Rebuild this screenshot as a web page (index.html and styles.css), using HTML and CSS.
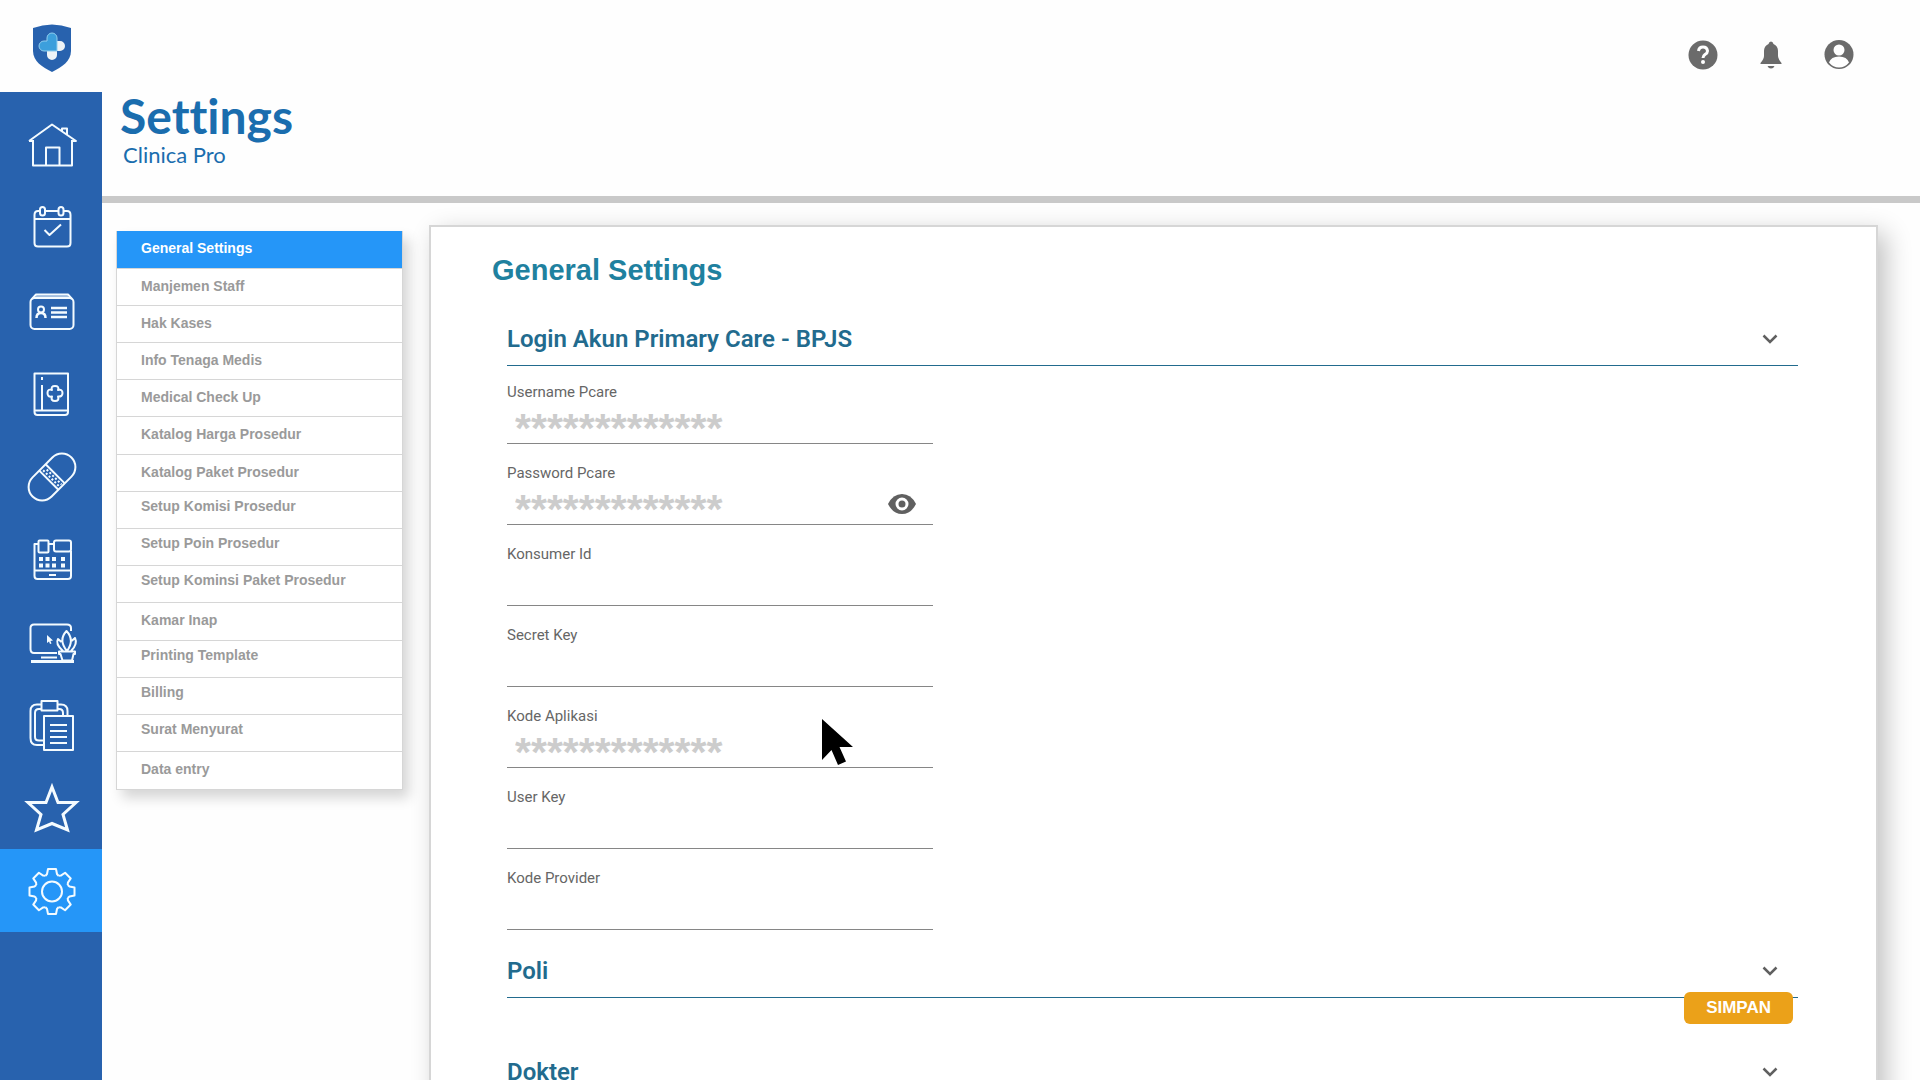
FILE: index.html
```html
<!DOCTYPE html>
<html lang="id">
<head>
  <meta charset="UTF-8" />
  <meta name="viewport" content="width=device-width, initial-scale=1.0"/>
  <title>Settings - Clinica Pro</title>
  <link rel="stylesheet" href="styles.css">
</head>
<body>
  <div class="app">
    <aside class="sidebar">
      <a class="logo" href="#" aria-label="Clinica Pro">
        <svg width="38" height="48" viewBox="0 0 38 48">
          <path d="M0 4Q19-3 38 4V27C38 37 29 43 19 48C9 43 0 37 0 27Z" fill="#2862ae"/>
          <path d="M19 17H27A5 5 0 0 1 27 27H24V31A5 5 0 0 1 14 31V22Z" fill="#eef3f6"/>
          <path d="M14 17V14A5 5 0 0 1 24 14V27H11A5 5 0 0 1 11 17Z" fill="#3c9fdc" stroke="#8fcdee" stroke-width="1"/>
        </svg>
      </a>
      <nav class="side-nav">
        <a href="#" aria-label="Home">
          <svg viewBox="0 0 60 60"><path d="M12 26V51.500H51V26M8 27L31 10.500L55 27H51M8 27H12M25 51V33.500H38.500V51M41 17V14.500H46V21"/></svg>
        </a>
        <a href="#" aria-label="Jadwal">
          <svg viewBox="0 0 60 60"><path d="M19 14H17Q13.500 14 13.500 18V46Q13.500 49.500 17 49.500H46Q49.500 49.500 49.500 46V18Q49.500 14 46 14H43M24 14H37M13.500 22H49.500M23.500 33L28.500 38L40 27.500"/><rect x="19" y="10" width="5" height="8.500" rx="2.500"/><rect x="37.500" y="10" width="5" height="8.500" rx="2.500"/></svg>
        </a>
        <a href="#" aria-label="Pasien">
          <svg viewBox="0 0 60 60"><rect x="9.500" y="18" width="43" height="31" rx="4"/><path d="M11 19L15 14.500H47L51 19"/><path d="M15 16.500H47" opacity=".6"/><circle cx="20" cy="29.500" r="3"/><path d="M15.500 38Q15.500 33 20 33T24.500 38M30 28H46M30 32.500H46M30 37H46" stroke-width="2.500"/></svg>
        </a>
        <a href="#" aria-label="Rekam Medis">
          <svg viewBox="0 0 60 60"><path d="M13.500 10.500H47V49Q47 52 44 52H16.500Q13.500 52 13.500 49ZM13.500 47.500H47M21 14V17M21 22V47M31 27Q29.500 23 34 23T37 27Q41.500 26 41.500 30T37 33.500Q38.500 38 34 38T31 33.500Q26.500 34.500 26.500 30T31 27Z"/></svg>
        </a>
        <a href="#" aria-label="Obat">
          <svg viewBox="0 0 60 60"><g transform="translate(31 31) rotate(-45)"><rect x="-27.500" y="-13.500" width="55" height="27" rx="13.500"/><path d="M-4.500-13.500V13.500M4.500-13.500V13.500"/><path class="dots" d="M-1.500-11V12M1.500-9V12"/></g></svg>
        </a>
        <a href="#" aria-label="Kasir">
          <svg viewBox="0 0 60 60"><path d="M17 15H13.500V47Q13.500 50 16.500 50H47Q50 50 50 47V22M27 15H33M13.500 41.500H50M28 46H35"/><rect x="17.500" y="11.500" width="10" height="12" rx="1"/><rect x="33" y="11.500" width="17" height="11" rx="2"/><path class="solid" d="M18 28h4v4h-4zM24.500 28h4v4h-4zM31 28h4v4h-4zM40 28h4v4h-4zM18 34.500h4v4h-4zM24.500 34.500h4v4h-4zM31 34.500h4v4h-4zM40 34.500h4v4h-4z"/></svg>
        </a>
        <a href="#" aria-label="Komputer">
          <svg viewBox="0 0 60 60"><path d="M36 41H13Q9.500 41 9.500 37V16Q9.500 12.500 13 12.500H46Q50 12.500 50 16V19M20 45.500H36"/><path d="M10 49.500H53" stroke-width="3"/><path class="solid" d="M26 23L32 28.500L29.500 29L30.500 31.500L29 32L28 29.500L26 31Z"/><path d="M38 39.500H54V42H52.500L51 48.500H41.500L39.500 42H38ZM46 39Q37 28 45.500 19Q54 28 46 39ZM42 39Q34 32 37 27L40.500 30M50 39Q57 32 54 26L50.500 29"/></svg>
        </a>
        <a href="#" aria-label="Laporan">
          <svg viewBox="0 0 60 60"><path d="M20 9.500H16Q9.500 9.500 9.500 16V43Q9.500 50 16 50H23M36 9.500H40Q46.500 9.500 46.500 16V21M20 14H18Q14 14 14 18V42Q14 45.500 18 45.500H23M36 14H38Q42 14 42 18V21M20.500 6H36.500V15.500H20.500ZM23 21H52V55H23ZM29 30H46M29 36H46M29 42H46M29 48H46"/></svg>
        </a>
        <a href="#" aria-label="Favorit">
          <svg viewBox="0 0 60 60"><path class="star" d="M31 9L37 24.500H55L42 36.500L46.500 52L31 45.500L15.500 52L20 36.500L7 24.500H25Z"/></svg>
        </a>
        <a class="active" href="#" aria-label="Settings" aria-current="page">
          <svg viewBox="0 0 60 60">
            <defs><path id="tooth" d="M-6.500-15.700L-5-17.500L-4-22.500H4L5-17.500L6.500-15.700"/></defs>
            <g transform="translate(31 30.500)">
              <circle r="10"/>
              <use href="#tooth"/>
              <use href="#tooth" transform="rotate(45)"/>
              <use href="#tooth" transform="rotate(90)"/>
              <use href="#tooth" transform="rotate(135)"/>
              <use href="#tooth" transform="rotate(180)"/>
              <use href="#tooth" transform="rotate(225)"/>
              <use href="#tooth" transform="rotate(270)"/>
              <use href="#tooth" transform="rotate(315)"/>
            </g>
          </svg>
        </a>
      </nav>
    </aside>

    <div class="main">
      <header class="header">
        <div class="title">
          <h1>Settings</h1>
          <p>Clinica Pro</p>
        </div>
        <div class="header-actions">
          <button type="button" aria-label="Bantuan">
            <svg width="30" height="30" viewBox="0 0 30 30"><circle cx="15" cy="15" r="14.500" fill="#6b6b6b"/><path d="M10.500 11Q11 7 15 7T19.500 11Q19.500 13 17 14.500Q15 16 15 18" fill="none" stroke="#fff" stroke-width="3"/><circle cx="15" cy="22" r="2" fill="#fff"/></svg>
          </button>
          <button type="button" aria-label="Notifikasi">
            <svg width="30" height="30" viewBox="0 0 30 30"><path d="M15 1.500Q17 1.500 17.500 4Q22 6 22 11V16Q22 19 25.500 23V24H4.500V23Q8 19 8 16V11Q8 6 12.500 4Q13 1.500 15 1.500ZM11.500 26H18.500Q17.500 28.500 15 28.500T11.500 26Z" fill="#6b6b6b"/></svg>
          </button>
          <button type="button" aria-label="Akun">
            <svg width="30" height="30" viewBox="0 0 30 30"><circle cx="15" cy="14.500" r="14.500" fill="#6b6b6b"/><circle cx="15" cy="10" r="5.500" fill="#fff"/><path d="M5 22.500Q7 16.500 15 16.500T25 22.500Q21 27.500 15 27.500T5 22.500Z" fill="#fff"/></svg>
          </button>
        </div>
      </header>

      <div class="content">
        <nav class="menu">
          <a class="active" href="#">General Settings</a>
          <a href="#">Manjemen Staff</a>
          <a href="#">Hak Kases</a>
          <a href="#">Info Tenaga Medis</a>
          <a href="#">Medical Check Up</a>
          <a href="#">Katalog Harga Prosedur</a>
          <a href="#">Katalog Paket Prosedur</a>
          <a class="high" href="#">Setup Komisi Prosedur</a>
          <a class="high" href="#">Setup Poin Prosedur</a>
          <a class="high" href="#">Setup Kominsi Paket Prosedur</a>
          <a href="#">Kamar Inap</a>
          <a class="high" href="#">Printing Template</a>
          <a class="high" href="#">Billing</a>
          <a class="high" href="#">Surat Menyurat</a>
          <a href="#">Data entry</a>
        </nav>

        <main class="panel">
          <h2>General Settings</h2>

          <section class="section open">
            <div class="section-head">
              <h3>Login Akun Primary Care - BPJS</h3>
              <button type="button" aria-label="Tutup Login Akun"><svg width="16" height="10" viewBox="0 0 16 10"><path d="M1.500 1.500L8 8L14.500 1.500"/></svg></button>
            </div>
            <form class="fields" id="pcare-form">
              <div class="field">
                <label for="username">Username Pcare</label>
                <input id="username" type="text" value="*************">
              </div>
              <div class="field">
                <label for="password">Password Pcare</label>
                <div class="input-wrap">
                  <input id="password" type="text" value="*************">
                  <button class="eye" type="button" aria-label="Lihat password">
                    <svg width="28" height="20" viewBox="0 0 28 20"><path d="M0 10Q5 0 14 0T28 10Q23 20 14 20T0 10Z" fill="#606060"/><circle cx="14" cy="10" r="5" fill="none" stroke="#fff" stroke-width="3"/></svg>
                  </button>
                </div>
              </div>
              <div class="field">
                <label for="konsumer">Konsumer Id</label>
                <input id="konsumer" type="text">
              </div>
              <div class="field">
                <label for="secret">Secret Key</label>
                <input id="secret" type="text">
              </div>
              <div class="field">
                <label for="aplikasi">Kode Aplikasi</label>
                <input id="aplikasi" type="text" value="*************">
              </div>
              <div class="field">
                <label for="userkey">User Key</label>
                <input id="userkey" type="text">
              </div>
              <div class="field">
                <label for="provider">Kode Provider</label>
                <input id="provider" type="text">
              </div>
            </form>
          </section>

          <section class="section">
            <div class="section-head">
              <h3>Poli</h3>
              <button type="button" aria-label="Buka Poli"><svg width="16" height="10" viewBox="0 0 16 10"><path d="M1.500 1.500L8 8L14.500 1.500"/></svg></button>
            </div>
          </section>

          <section class="section">
            <div class="section-head">
              <h3>Dokter</h3>
              <button type="button" aria-label="Buka Dokter"><svg width="16" height="10" viewBox="0 0 16 10"><path d="M1.500 1.500L8 8L14.500 1.500"/></svg></button>
            </div>
          </section>
        </main>
      </div>
    </div>

    <button class="save" type="submit" form="pcare-form">SIMPAN</button>

    <svg class="cursor" width="32" height="46" viewBox="0 0 32 46"><path d="M0 0V41L9.500 31L16 46L24 42.500L17.500 28H31Z"/></svg>
  </div>
</body>
</html>
```

FILE: styles.css
```css
:root {
  --blue: #2862ae;
  --active: #2596f8;
  --title: #1a6dae;
  --heading: #1f819f;
  --section: #226b8e;
  --icon: #606060;
  --line: #d6d6d6;
}

* {
  box-sizing: border-box;
}

body {
  margin: 0;
  font-family: Roboto, sans-serif;
  background: #fefefe;
}

h1, h2, h3, p {
  margin: 0;
}

button {
  padding: 0;
  border: none;
  background: none;
  cursor: pointer;
}

svg {
  display: block;
}

.app {
  position: relative;
  display: flex;
  height: 100vh;
  overflow: hidden;
}

/* sidebar */
.sidebar {
  display: flex;
  flex-direction: column;
  flex: none;
  width: 102px;
}

.logo {
  display: flex;
  justify-content: center;
  height: 92px;
  padding: 24px 0 0 2px;
}

.side-nav {
  flex: 1;
  padding-top: 10px;
  background: var(--blue);
}

.side-nav a {
  display: flex;
  align-items: center;
  justify-content: center;
  height: 83px;
}

.side-nav a.active {
  background: var(--active);
}

.side-nav svg {
  width: 60px;
  height: 60px;
  fill: none;
  stroke: #f4fbff;
  stroke-width: 2;
  stroke-linejoin: round;
}

.side-nav .solid {
  fill: #f4fbff;
  stroke: none;
}

.side-nav .dots {
  stroke-width: 2;
  stroke-dasharray: 2 2;
}

.side-nav .star {
  stroke-width: 3;
  stroke-linejoin: miter;
}

/* header */
.main {
  display: flex;
  flex-direction: column;
  flex: 1;
  min-width: 0;
}

.header {
  display: flex;
  justify-content: space-between;
  align-items: flex-start;
  height: 203px;
  padding: 40px 66px 0 18px;
  border-bottom: 7px solid #c9c9c9;
}

.title {
  padding-top: 48px;
  font-family: Lato, sans-serif;
  font-variant-ligatures: none;
  color: var(--title);
}

.title h1 {
  font-size: 48px;
  line-height: 56px;
  font-weight: 700;
}

.title p {
  padding-left: 3px;
  font-size: 22px;
  line-height: 22px;
}

.header-actions {
  display: flex;
  gap: 38px;
}

/* content */
.content {
  display: flex;
  align-items: flex-start;
  flex: 1;
  min-height: 0;
  gap: 26px;
  padding: 22px 42px 0 14px;
}

.menu {
  flex: none;
  width: 287px;
  margin-top: 6px;
  border: 1px solid var(--line);
  border-top: none;
  background: #fff;
  box-shadow: 6px 8px 12px rgba(0, 0, 0, 0.16);
}

.menu a {
  display: flex;
  align-items: center;
  height: 37px;
  padding: 0 0 3px 24px;
  border-bottom: 1px solid var(--line);
  font: bold 14px "Liberation Sans", sans-serif;
  color: #9a9a9a;
  text-decoration: none;
}

.menu a:nth-child(5n + 1) {
  height: 38px;
}

.menu a:last-child {
  border-bottom: none;
}

.menu a.high {
  padding-bottom: 8px;
}

.menu a.active {
  background: var(--active);
  color: #fff;
}

.panel {
  flex: 1;
  min-width: 0;
  padding: 27px 78px 0 76px;
  border: 2px solid var(--line);
  background: #fff;
  box-shadow: 8px 8px 24px rgba(0, 0, 0, 0.24);
}

.panel h2 {
  margin-left: -15px;
  font: bold 29px/32px "Liberation Sans", sans-serif;
  color: var(--heading);
}

.section {
  margin-bottom: 46px;
}

.section.open {
  margin: 25px 0 13px;
}

.section-head {
  display: flex;
  justify-content: space-between;
  align-items: center;
  height: 55px;
  padding: 2px 20px 0 0;
  border-bottom: 1px solid var(--section);
}

.section-head h3 {
  font-size: 24px;
  line-height: 28px;
  font-weight: 600;
  color: var(--section);
}

.section-head svg {
  fill: none;
  stroke: var(--icon);
  stroke-width: 2.5;
}

.fields {
  display: flex;
  flex-direction: column;
  gap: 19px;
  width: 33%;
  padding-top: 16px;
}

.field label {
  display: block;
  font-size: 15px;
  line-height: 20px;
  color: #666;
}

.field input {
  display: block;
  width: 100%;
  height: 42px;
  padding: 12px 8px 0;
  border: none;
  border-bottom: 1px solid #868686;
  background: none;
  font: bold 41px "Liberation Sans", sans-serif;
  color: #ccc;
}

.input-wrap {
  position: relative;
}

.eye {
  position: absolute;
  right: 17px;
  top: 11px;
}

/* floating save button */
.save {
  position: absolute;
  right: 127px;
  bottom: 56px;
  padding: 6px 22px;
  border-radius: 6px;
  background: #eba119;
  font: bold 17px/20px "Liberation Sans", sans-serif;
  color: #fff;
}

.cursor {
  position: absolute;
  left: 822px;
  top: 719px;
  pointer-events: none;
}
```
